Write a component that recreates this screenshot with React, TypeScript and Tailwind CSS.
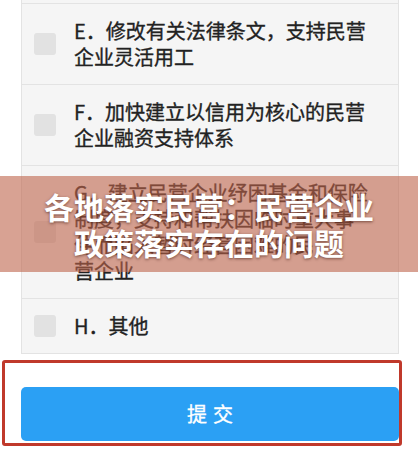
import React from "react";

const font = '"Noto Sans CJK SC", "Noto Sans", sans-serif';

type Item = { lines: string[] };

const items: Item[] = [
  { lines: ["E．修改有关法律条文，支持民营", "企业灵活用工"] },
  { lines: ["F．加快建立以信用为核心的民营", "企业融资支持体系"] },
  {
    lines: [
      "G．建立民营企业纾困基金和保险",
      "制度，支持和帮扶因临时重大事",
      "件而陷入暂时经营困难的民",
      "营企业",
    ],
  },
  { lines: ["H．其他"] },
];

function Row({ item }: { item: Item }) {
  return (
    <div className="flex items-center border-b border-[#e3e3e3] bg-[#f5f5f5] py-[14px] pl-[12px]">
      <div className="h-[22px] w-[22px] shrink-0 rounded-[3px] bg-[#e2e2e2]" />
      <div className="ml-[18px] text-[20px] leading-[26px] text-[#222] [-webkit-text-stroke:0.35px_#222]">
        {item.lines.map((l, i) => (
          <div key={i}>{l}</div>
        ))}
      </div>
    </div>
  );
}

export default function App() {
  return (
    <div
      className="relative h-[449px] w-[418px] overflow-hidden bg-white"
      style={{ fontFamily: font }}
    >
      <div className="mx-[21px] w-[378px] border-x border-[#e3e3e3]">
        <div className="h-[4px] border-b border-[#e3e3e3] bg-[#f5f5f5]" />
        {items.map((it, i) => (
          <Row key={i} item={it} />
        ))}
      </div>

      <div className="mx-[2px] mt-[6px] h-[86px] w-[400px] rounded-[3px] border-[3px] border-[#c0392b] bg-white px-[16px] pt-[24px]">
        <button className="flex h-[54px] w-[378px] items-center justify-center gap-[6px] rounded-[5px] bg-[#2ba0f4] text-[20px] text-white [-webkit-text-stroke:0.35px_#fff]">
          <span>提</span>
          <span>交</span>
        </button>
      </div>

      <div className="absolute left-0 top-[176px] flex h-[96px] w-[418px] flex-col items-center justify-center bg-[rgba(190,100,75,0.6)] text-[30px] font-bold leading-[36px] text-white [text-shadow:0_1px_3px_rgba(60,20,10,0.6)]">
        <div>各地落实民营：民营企业</div>
        <div>政策落实存在的问题</div>
      </div>
    </div>
  );
}
